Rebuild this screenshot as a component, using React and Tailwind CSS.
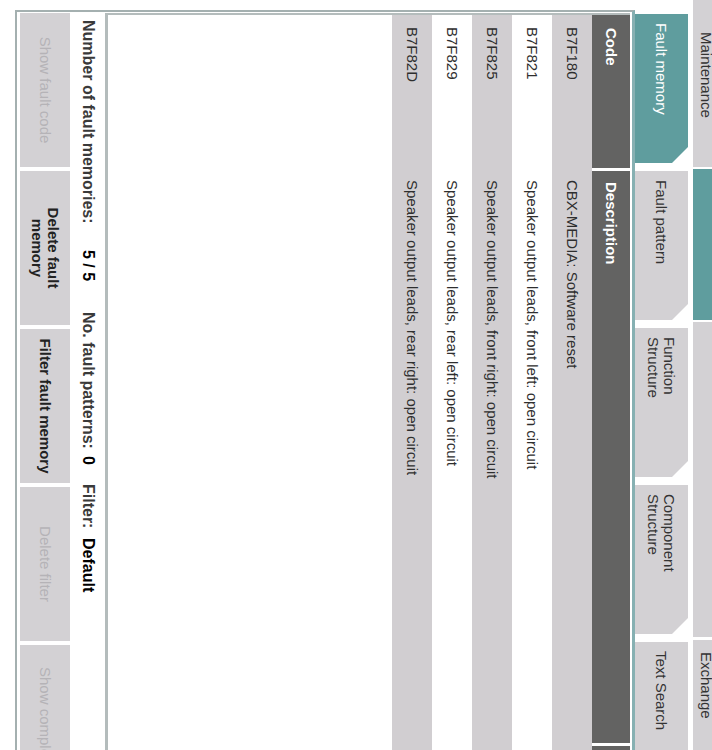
import React from "react";

const chamfer =
  "[clip-path:polygon(0_0,calc(100%_-_16px)_0,100%_16px,100%_100%,0_100%)]";

function SubTab({ label, active }) {
  return (
    <div
      className={`w-[149px] h-[53px] shrink-0 flex items-center px-[9px] text-[15px] leading-[16px] ${chamfer} ${
        active ? "bg-[#5f9d9e] text-white" : "bg-[#d3d1d4] text-[#333333]"
      }`}
    >
      {label}
    </div>
  );
}

const rows = [
  ["B7F180", "CBX-MEDIA: Software reset"],
  ["B7F821", "Speaker output leads, front left: open circuit"],
  ["B7F825", "Speaker output leads, front right: open circuit"],
  ["B7F829", "Speaker output leads, rear left: open circuit"],
  ["B7F82D", "Speaker output leads, rear right: open circuit"],
];

function Btn({ children, enabled }) {
  return (
    <div
      className={`w-[154px] h-[50px] shrink-0 bg-[#d3d1d4] flex items-center justify-center text-center text-[15px] leading-[16px] px-2 ${
        enabled ? "font-bold text-[#222222]" : "text-[#b5b3b7]"
      }`}
    >
      {children}
    </div>
  );
}

export default function App() {
  return (
    <div className="relative w-[712px] h-[750px] overflow-hidden bg-white font-['Liberation_Sans',Arial,sans-serif]">
      <div className="absolute left-0 top-0 w-[750px] h-[712px] origin-top-left rotate-90 translate-x-[712px] bg-white flex flex-col">
        {/* top tabs (clipped) */}
        <div className="h-[19px] shrink-0 flex gap-[2px] overflow-hidden">
          <div className="w-[167px] shrink-0 bg-[#d3d1d4] text-[#333333] text-[15px] leading-[18px] pl-[32px] -mt-[3px]">
            Maintenance
          </div>
          <div className="w-[151px] shrink-0 bg-[#5f9d9e] -mt-[3px]"></div>
          <div className="w-[315px] shrink-0 bg-[#d3d1d4] -mt-[3px]"></div>
          <div className="w-[110px] shrink-0 ml-[1px] bg-[#d3d1d4] text-[#333333] text-[15px] leading-[18px] pl-[12px] -mt-[3px]">
            Exchange
          </div>
        </div>
        <div className="h-[5px] shrink-0"></div>
        {/* sub tabs */}
        <div className="h-[53px] shrink-0 flex gap-[8px] pl-[14px] overflow-hidden">
          <SubTab label="Fault memory" active />
          <SubTab label="Fault pattern" />
          <SubTab
            label={
              <span>
                Function
                <br />
                Structure
              </span>
            }
          />
          <SubTab
            label={
              <span>
                Component
                <br />
                Structure
              </span>
            }
          />
          <SubTab label="Text Search" />
        </div>
        {/* content */}
        <div className="ml-[10px] h-[620px] shrink-0 flex flex-col border-t-[3px] border-t-[#86b0b2] border-l-[2px] border-b-[2px] border-l-[#a4b0b0] border-b-[#a4b0b0] pt-[2px] pb-[3px]">
          <div className="h-[525px] shrink-0 ml-[1px] border-l-[2px] border-b-[3px] border-[#b4bcbc] flex flex-col overflow-hidden">
            <div className="h-[38px] shrink-0 flex gap-[3px] text-white font-bold text-[15px]">
              <div className="w-[153px] shrink-0 bg-[#636362] flex items-center pl-[13px]">
                Code
              </div>
              <div className="w-[572px] shrink-0 bg-[#636362] flex items-center pl-[11px]">
                Description
              </div>
              <div className="flex-1 bg-[#636362]"></div>
            </div>
            {rows.map(([code, desc], i) => (
              <div
                key={code}
                className={`h-[40px] shrink-0 flex items-center text-[15px] text-[#2e2e2e] ${
                  i % 2 === 0 ? "bg-[#d1ced1]" : "bg-white"
                }`}
              >
                <div className="w-[156px] shrink-0 pl-[12px]">{code}</div>
                <div className="flex-1 pl-[9px]">{desc}</div>
              </div>
            ))}
          </div>
          <div className="h-[33px] shrink-0 flex items-center pl-[8px] text-[16px] font-bold whitespace-nowrap">
            <span className="w-[230px] shrink-0 text-[#3a3a3a]">
              Number of fault memories:
            </span>
            <span className="w-[62px] shrink-0 text-black">5 / 5</span>
            <span className="w-[144px] shrink-0 text-[#3a3a3a]">
              No. fault patterns:
            </span>
            <span className="w-[28px] shrink-0 text-black">0</span>
            <span className="w-[54px] shrink-0 text-[#3a3a3a]">Filter:</span>
            <span className="text-black">Default</span>
          </div>
          <div className="mt-[2px] h-[50px] shrink-0 ml-[1px] flex gap-[4px] overflow-hidden">
            <Btn>Show fault code</Btn>
            <Btn enabled>
              Delete fault
              <br />
              memory
            </Btn>
            <Btn enabled>Filter fault memory</Btn>
            <Btn>Delete filter</Btn>
            <div className="w-[154px] h-[50px] shrink-0 bg-[#d3d1d4] flex items-center pl-[22px] text-[15px] text-[#b5b3b7] whitespace-nowrap">
              Show complete list
            </div>
          </div>
        </div>
      </div>
    </div>
  );
}
